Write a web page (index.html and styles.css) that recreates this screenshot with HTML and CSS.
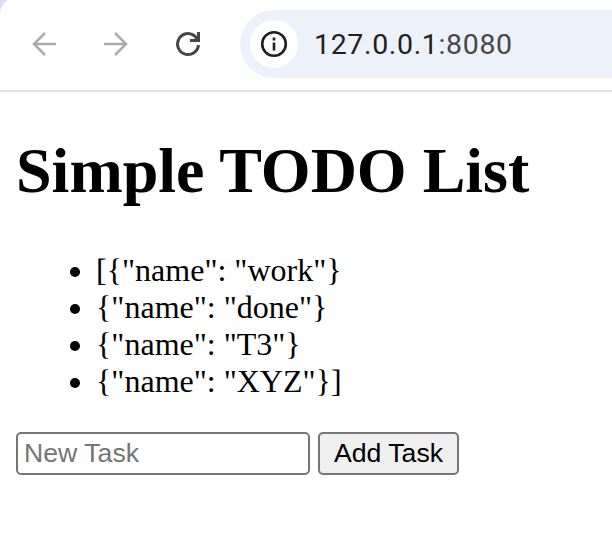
FILE: index.html
```html
<!DOCTYPE html>
<html lang="en">
<head>
<meta charset="utf-8">
<title>Simple TODO List</title>
<link rel="stylesheet" href="styles.css">
</head>
<body>
<header class="toolbar">
  <svg class="icon muted" viewBox="0 0 32 32"><path d="M28 16H6M17 5 6 16l11 11"/></svg>
  <svg class="icon muted" viewBox="0 0 32 32"><path d="M4 16h22M15 5l11 11-11 11"/></svg>
  <svg class="icon reload" viewBox="0 0 32 32"><path d="M26.500 17A10.500 10.500 0 1 1 22.500 7.800L26 12M26.500 4v8.500H18"/></svg>
  <div class="address">
    <span class="info"><svg class="icon" viewBox="0 0 32 32"><circle cx="16" cy="16" r="11.800"/><path d="M16 14.500v8M16 9.500v3"/></svg></span>
    <span class="url">127.0.0.1<span class="port">:8080</span></span>
  </div>
</header>
<main>
  <h1>Simple TODO List</h1>
  <ul>
    <li><span>[{"name": "work"}</span></li>
    <li><span>{"name": "done"}</span></li>
    <li><span>{"name": "T3"}</span></li>
    <li><span>{"name": "XYZ"}]</span></li>
  </ul>
  <form>
    <input type="text" placeholder="New Task">
    <button type="button">Add Task</button>
  </form>
</main>
</body>
</html>
```
FILE: styles.css
```css
* { box-sizing: border-box; }
body { margin: 0; background: #fff; color: #000; font-family: "Liberation Serif", serif; overflow: hidden; }
.toolbar { height: 92px; border-bottom: 2px solid #e1e1e1; display: flex; align-items: center; gap: 40px; padding: 0 0 2px 28px; background: radial-gradient(circle at 16px 14px, #fff 15.500px, #d3e0fc 16.500px) 0 0 / 14px 14px no-repeat, #fff; }
.icon { width: 32px; height: 32px; flex: none; fill: none; stroke: #1f1f1f; stroke-width: 2.600; }
.muted { stroke: #acacac; }
.reload { stroke: #474747; stroke-width: 3; }
.address { height: 68px; flex: 1; margin: -1px 0 0 -4px; border-radius: 34px 0 0 34px; background: #edf2fa; display: flex; align-items: center; padding-left: 10px; }
.info { width: 48px; height: 48px; border-radius: 50%; background: #fff; display: flex; align-items: center; justify-content: center; }
.url { margin: 1px 0 0 16px; font: 28.500px Roboto, sans-serif; letter-spacing: .65px; color: #1f1f1f; }
.port { color: #474747; }
main { padding: 0 16px; }
h1 { margin: 42px 0 0; font-size: 64px; line-height: 74px; white-space: nowrap; }
ul { list-style: none; margin: 44px 0 0; padding: 0 0 0 54px; font-size: 32px; line-height: 37px; }
li { display: flex; align-items: center; gap: 16px; }
li::before { content: ""; width: 10px; height: 10px; margin-top: 2px; border-radius: 50%; background: #000; }
form { display: flex; gap: 8px; margin-top: 32px; }
input, button { height: 43px; border: 2px solid #767676; border-radius: 5px; font: 26.670px "Liberation Sans", sans-serif; color: #000; }
input { width: 294px; padding: 0 6px; background: #fff; }
input::placeholder { color: #757575; opacity: 1; }
button { width: 141px; padding: 0; background: #efefef; }
```
